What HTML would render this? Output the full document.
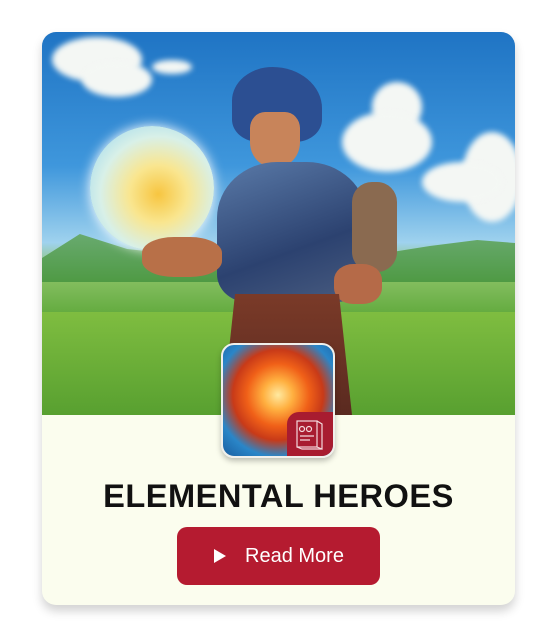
<!DOCTYPE html>
<html><head><meta charset="utf-8"><style>
html,body{margin:0;padding:0;width:551px;height:624px;background:#fff;overflow:hidden;font-family:"Liberation Sans",sans-serif}
.card{position:absolute;left:42px;top:32px;width:473px;height:573px;border-radius:14px;background:#fbfdee;overflow:hidden;box-shadow:0 6px 10px rgba(0,0,0,.18)}
.img{position:absolute;left:0;top:0;width:473px;height:383px;overflow:hidden;
background:linear-gradient(180deg,#1f74c4 0%,#3f97dc 35%,#9fd2ee 55%,#8fc46a 62%,#5ea83a 75%,#6eb23c 100%)}
.c{position:absolute;background:#f4f7f4;border-radius:50%;filter:blur(3px)}
.b{position:absolute}
.thumb{position:absolute;left:179px;top:311px;width:110px;height:111px;border-radius:13px;border:2px solid #f0f0ec;overflow:hidden;box-shadow:0 3px 6px rgba(0,0,0,.25);
background:radial-gradient(circle at 50% 45%,#ffe9a0 0%,#ffb040 18%,#f06018 38%,#c83a18 55%,#2a86c8 75%,#1a5ea0 100%)}
.badge{position:absolute;right:0;bottom:0;width:46px;height:44px;background:#a81c30;border-top-left-radius:12px}
h1{position:absolute;left:0;width:473px;top:445px;margin:0;text-align:center;font-size:32.6px;font-weight:bold;color:#111;letter-spacing:.5px}
.btn{position:absolute;left:135px;top:495px;width:203px;height:58px;border-radius:10px;background:#b51b30;color:#fff;font-size:20px;line-height:58px}
.btn span{position:absolute;left:68px}
.tri{position:absolute;left:37px;top:22px;width:0;height:0;border-left:12px solid #fff;border-top:7px solid transparent;border-bottom:7px solid transparent}
</style></head><body>
<div class="card">
 <div class="img">
  <div class="c" style="left:10px;top:5px;width:90px;height:45px"></div>
  <div class="c" style="left:40px;top:30px;width:70px;height:35px"></div>
  <div class="c" style="left:110px;top:28px;width:40px;height:14px"></div>
  <div class="c" style="left:330px;top:50px;width:50px;height:50px"></div>
  <div class="c" style="left:300px;top:80px;width:90px;height:60px"></div>
  <div class="c" style="left:420px;top:100px;width:60px;height:90px"></div>
  <div class="c" style="left:380px;top:130px;width:80px;height:40px"></div>
  <div class="b" style="left:0;top:190px;width:473px;height:60px;background:linear-gradient(180deg,#6fae7a,#4f9a44);clip-path:polygon(0 60%,8% 20%,18% 45%,30% 55%,70% 55%,82% 40%,92% 30%,100% 35%,100% 100%,0 100%)"></div>
  <div class="b" style="left:0;top:280px;width:473px;height:103px;background:linear-gradient(180deg,#7fbd40,#58a030)"></div>
  <div class="b" style="left:48px;top:94px;width:124px;height:124px;border-radius:50%;background:radial-gradient(circle at 55% 55%,#f7c540 0%,#f9e690 30%,#d8f0e8 60%,#a8dcec 85%,#e8f6ff 100%);box-shadow:0 0 12px #fff"></div>
  <div class="b" style="left:190px;top:35px;width:90px;height:75px;background:#2c4f92;border-radius:45% 55% 30% 30%"></div>
  <div class="b" style="left:208px;top:80px;width:50px;height:55px;background:#c8845a;border-radius:30% 30% 45% 45%"></div>
  <div class="b" style="left:175px;top:130px;width:150px;height:140px;background:linear-gradient(160deg,#5a7aa8,#2c4270 60%,#4a5d80);border-radius:40% 40% 20% 20%"></div>
  <div class="b" style="left:310px;top:150px;width:45px;height:90px;background:#8a6a50;border-radius:20px"></div>
  <div class="b" style="left:292px;top:232px;width:48px;height:40px;background:#b56a48;border-radius:40%"></div>
  <div class="b" style="left:100px;top:205px;width:80px;height:40px;background:#b87048;border-radius:40%"></div>
  <div class="b" style="left:180px;top:262px;width:130px;height:121px;background:linear-gradient(180deg,#7a3a28,#5a2a20);clip-path:polygon(10% 0,90% 0,100% 100%,0 100%)"></div>
 </div>
 <div class="thumb"><div class="badge">
  <svg width="46" height="44" viewBox="0 0 46 44"><g fill="none" stroke="#f3d8dc" stroke-width="1.2"><rect x="10" y="9" width="20" height="26"/><path d="M30 9l5 3v25l-5-2M10 35l5 2h20"/><circle cx="15" cy="17" r="2.5"/><circle cx="22" cy="17" r="2.5"/><path d="M13 24h14M13 28h10"/></g></svg>
 </div></div>
 <h1>ELEMENTAL HEROES</h1>
 <div class="btn"><div class="tri"></div><span>Read More</span></div>
</div>
</body></html>
